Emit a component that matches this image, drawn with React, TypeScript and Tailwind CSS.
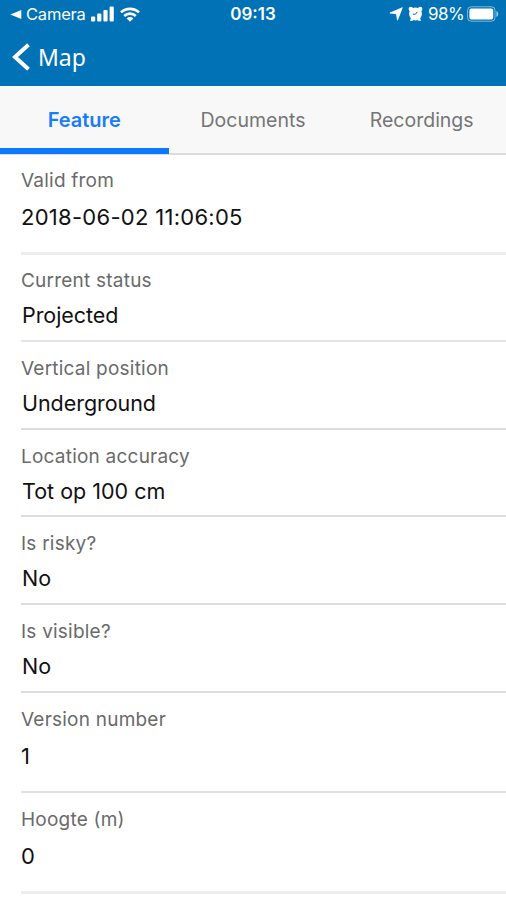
import React from "react";
import clsx from "clsx";

type Field = {
  label: string;
  value: string;
  row: string;
  valueClass: string;
};

const tabs = ["Feature", "Documents", "Recordings"];

const fields: Field[] = [
  {
    label: "Valid from",
    value: "2018-06-02 11:06:05",
    row: "h-[100px] pt-[13px] border-b-[3px] border-[#ededee]",
    valueClass: "mt-[9px] text-[22px] tracking-[0.28px]",
  },
  {
    label: "Current status",
    value: "Projected",
    row: "h-[87px] pt-[13px] border-b-2 border-[#e3e3e4]",
    valueClass: "mt-[7px] pl-px text-[21.5px] tracking-[-0.05px]",
  },
  {
    label: "Vertical position",
    value: "Underground",
    row: "h-[88px] pt-[14px] border-b-2 border-[#dcdcde]",
    valueClass: "mt-[7px] pl-px text-[21.5px] tracking-[-0.05px]",
  },
  {
    label: "Location accuracy",
    value: "Tot op 100 cm",
    row: "h-[87px] pt-[14px] border-b-2 border-[#dcdcde]",
    valueClass: "mt-[7px] pl-px text-[21.5px]",
  },
  {
    label: "Is risky?",
    value: "No",
    row: "h-[88px] pt-[14px] border-b-2 border-[#dcdcde]",
    valueClass: "mt-[7px] pl-px text-[21.5px]",
  },
  {
    label: "Is visible?",
    value: "No",
    row: "h-[88px] pt-[14px] border-b-2 border-[#dcdcde]",
    valueClass: "mt-[7px] pl-px text-[21.5px]",
  },
  {
    label: "Version number",
    value: "1",
    row: "h-[100px] pt-[14px] border-b-2 border-[#e0e0e1]",
    valueClass: "mt-[9px] text-[22px]",
  },
  {
    label: "Hoogte (m)",
    value: "0",
    row: "h-[101px] pt-[14px] border-b-[3px] border-[#ededee]",
    valueClass: "mt-[9px] text-[22px]",
  },
];

const StatusBar: React.FC = () => (
  <div className="flex h-7 items-center justify-between pl-[10px] pr-[7px] text-[17px] leading-7">
    <div className="flex w-[200px] items-center">
      <svg width="12" height="9" viewBox="0 0 12 9" fill="currentColor">
        <path d="M.3 4.5 11.3 0v9z" />
      </svg>
      <span className="ml-[4px] w-[60px] text-[16.5px] tracking-[-0.2px]">Camera</span>
      <svg className="ml-[5px]" width="24" height="16" viewBox="0 0 24 16" fill="currentColor">
        <rect x="0" y="10.5" width="4.2" height="5" rx="1" />
        <rect x="6.2" y="7.5" width="4.2" height="8" rx="1" />
        <rect x="12.4" y="4" width="4.2" height="11.5" rx="1" />
        <rect x="18.6" y="0.5" width="4.2" height="15" rx="1" />
      </svg>
      <svg className="ml-[5px]" width="20" height="15" viewBox="0 0 20 15" fill="none" stroke="currentColor" strokeWidth="2.7">
        <path d="M1 5.4a13 13 0 0 1 18 0" />
        <path d="M4.2 9a8.3 8.3 0 0 1 11.6 0" />
        <path d="M10 14.7 6.6 11.4a4.9 4.9 0 0 1 6.8 0z" fill="currentColor" stroke="none" />
      </svg>
    </div>
    <span className="pr-[3px] font-semibold">09:13</span>
    <div className="flex w-[200px] items-center justify-end">
      <svg width="14" height="14" viewBox="0 0 14 14" fill="currentColor" stroke="currentColor" strokeWidth="0.8" strokeLinejoin="round">
        <path d="M13.3.7 8.5 13.2 7.4 6.8.9 6z" />
      </svg>
      <svg className="ml-[5px]" width="15" height="16" viewBox="0 0 15 16">
        <g fill="currentColor">
          <circle cx="7.5" cy="8" r="6.4" />
          <circle cx="2.8" cy="3" r="2.2" />
          <circle cx="12.2" cy="3" r="2.2" />
          <path d="m1.900 14.800 1.600-4 3 2.600-2 1.400zM13.100 14.800l-1.600-4-3 2.600 2 1.400z" />
        </g>
        <path d="M7.500 8.200 9.300 5.800M7.500 8.200H4.800" stroke="#0072b5" strokeWidth="1" fill="none" />
      </svg>
      <span className="ml-[5px] text-[17px] tracking-[-0.6px]">98%</span>
      <svg className="ml-[3px]" width="32" height="16" viewBox="0 0 32 16">
        <rect x="0.6" y="0.8" width="27.4" height="14.4" rx="3.5" fill="none" stroke="#fff" strokeOpacity="0.5" />
        <rect x="2.4" y="2.5" width="23.8" height="11" rx="2" fill="#fff" />
        <path d="M29.4 5c2.400.8 2.400 5.200 0 6z" fill="#fff" fillOpacity="0.6" />
      </svg>
    </div>
  </div>
);

const FieldRow: React.FC<{ field: Field }> = ({ field }) => (
  <div className={clsx("ml-[21px] shrink-0", field.row)}>
    <dt className="text-[19px] leading-[26px] tracking-[0.22px] text-[#6a6a6a]">
      {field.label}
    </dt>
    <dd className={clsx("leading-[28px] text-[#111]", field.valueClass)}>
      {field.value}
    </dd>
  </div>
);

const App: React.FC = () => {
  return (
    <div className="flex h-[900px] w-[506px] flex-col overflow-hidden bg-white font-[Inter,sans-serif]">
      <header className="h-[86px] shrink-0 bg-[#0072b5] text-white">
        <StatusBar />
        <button className="flex h-[58px] items-center pl-[12px]">
          <svg width="19" height="28" viewBox="0 0 19 28" fill="none" stroke="currentColor" strokeWidth="4">
            <path d="M16.5 1.700 3 14l13.500 12.300" />
          </svg>
          <span className="ml-[7px] font-['Noto_Sans',sans-serif] text-[23px] leading-8">Map</span>
        </button>
      </header>

      <nav className="grid h-[69px] shrink-0 grid-cols-3 border-b-2 border-[#dcdcdc] bg-[#f8f8f8]">
        {tabs.map((tab, i) => (
          <button
            key={tab}
            className={clsx(
              "-mb-px h-[68px]",
              i === 0
                ? "border-b-[6px] border-[#0a78ff] pt-[6px] text-[20px] font-semibold text-[#1a7cf7]"
                : "pt-[2px] text-[19.5px] text-[#757575]"
            )}
          >
            {tab}
          </button>
        ))}
      </nav>

      <dl className="flex flex-col">
        {fields.map((field) => (
          <FieldRow key={field.label} field={field} />
        ))}
      </dl>
    </div>
  );
};

export default App;
